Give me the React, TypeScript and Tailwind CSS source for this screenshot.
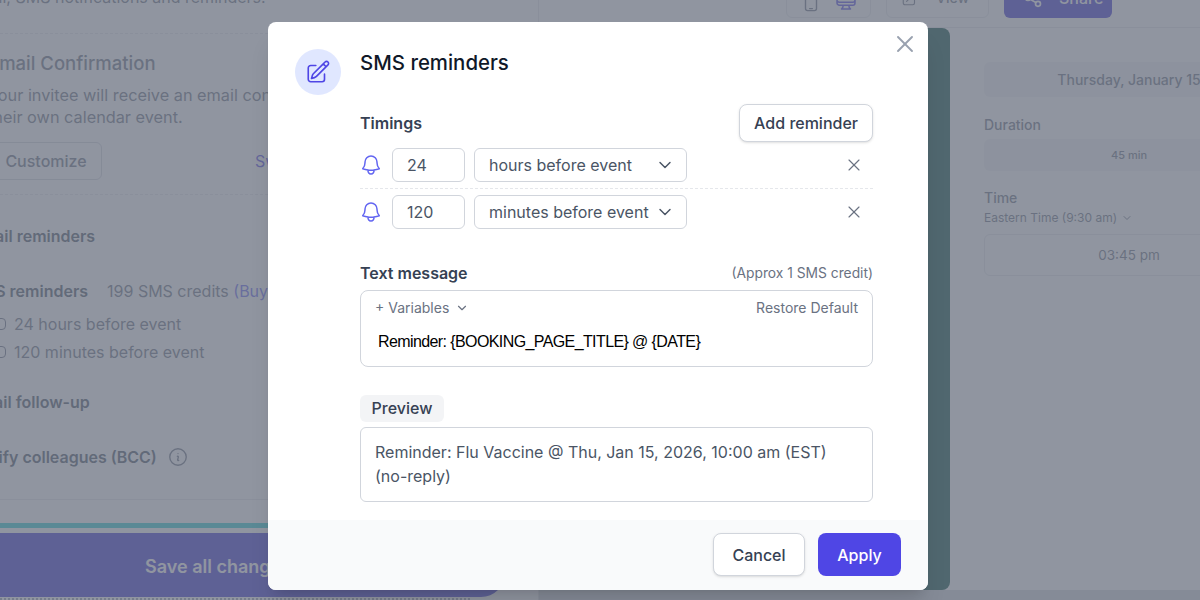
import React from 'react';
import { HiOutlineBell, HiOutlinePencilSquare, HiOutlineArrowTopRightOnSquare, HiOutlineDevicePhoneMobile, HiOutlineComputerDesktop, HiOutlineInformationCircle } from 'react-icons/hi2';
import { ChevronDown, Share2, X } from 'lucide-react';

const ReminderRow = ({ value, unit }: { value: string; unit: string }) => (
  <div className="flex items-center h-[34px]">
    <HiOutlineBell className="w-[24px] h-[24px] -ml-[1px] text-[#6366f1]" />
    <div className="ml-[9px] w-[73px] h-full border border-gray-300 rounded-md pl-[14px] flex items-center text-gray-600 text-base">
      {value}
    </div>
    <div className="ml-[9px] w-[213px] h-full border border-gray-300 rounded-md pl-[14px] pr-[11px] flex items-center justify-between text-gray-600 text-base">
      <span>{unit}</span>
      <ChevronDown className="w-[20px] h-[20px] text-gray-600" strokeWidth={1.75} />
    </div>
    <X className="ml-[157px] w-[20px] h-[20px] text-gray-500" strokeWidth={1.4} />
  </div>
);

const SmsModal = () => (
  <div className="absolute left-[268px] top-[22px] w-[660px] h-[568px] bg-white rounded-lg shadow-xl flex flex-col overflow-hidden">
    <div className="relative flex-1 flex pl-[27px] pt-[27px]">
      <div className="w-[46px] h-[46px] rounded-full bg-indigo-100 flex items-center justify-center">
        <HiOutlinePencilSquare className="w-[26px] h-[26px] text-[#4f46e5]" />
      </div>
      <div className="ml-[19px] w-[513px] -mt-[27px] flex flex-col">
        <h2 className="mt-[27px] text-[20.4px] leading-7 font-medium text-gray-900">SMS reminders</h2>

        <div className="mt-[27px] flex items-center justify-between h-[38px]">
          <span className="text-base font-semibold text-gray-700">Timings</span>
          <button className="h-[38px] px-[14px] border border-gray-300 rounded-lg shadow-sm text-base font-medium text-gray-700 bg-white">
            Add reminder
          </button>
        </div>

        <div className="mt-[6px] pb-[6px] border-b border-dashed border-gray-200">
          <ReminderRow value="24" unit="hours before event" />
        </div>
        <div className="mt-[6px]">
          <ReminderRow value="120" unit="minutes before event" />
        </div>

        <div className="mt-[32px] flex items-center justify-between h-[24px]">
          <span className="text-base font-semibold text-gray-700">Text message</span>
          <span className="text-[13.8px] text-gray-500">(Approx 1 SMS credit)</span>
        </div>
        <div className="mt-[5px] h-[77px] border border-gray-300 rounded-lg px-[14px] pt-[7px]">
          <div className="flex items-center justify-between h-[20px] text-sm text-gray-500">
            <span className="flex items-center gap-[6px]">
              + Variables <ChevronDown className="w-[14px] h-[14px]" />
            </span>
            <span>Restore Default</span>
          </div>
          <p className="mt-[12px] ml-[3px] text-base tracking-[-0.6px] leading-6 text-black font-['Liberation_Sans',sans-serif]">
            {'Reminder: {BOOKING_PAGE_TITLE} @ {DATE}'}
          </p>
        </div>

        <div className="mt-[28px] w-[84px] h-[27px] bg-gray-100 rounded-md flex items-center justify-center pb-[1px] text-base font-medium text-gray-700">
          Preview
        </div>
        <div className="mt-[5px] h-[75px] border border-gray-300 rounded-md px-[14px] py-[12px] text-base leading-6 text-gray-600">
          Reminder: Flu Vaccine @ Thu, Jan 15, 2026, 10:00 am (EST) (no-reply)
        </div>
      </div>
      <button className="absolute right-[9px] top-[8px] text-gray-400">
        <X className="w-[28px] h-[28px]" strokeWidth={1.6} />
      </button>
    </div>

    <div className="h-[70px] bg-gray-50 flex items-center justify-end gap-[13px] pr-[27px] pb-[1px]">
      <button className="w-[92px] h-[43px] bg-white border border-gray-300 rounded-lg shadow-sm text-base font-medium text-gray-700">
        Cancel
      </button>
      <button className="w-[83px] h-[43px] bg-[#4f46e5] rounded-lg text-base font-medium text-white">
        Apply
      </button>
    </div>
  </div>
);

const LeftPane = () => (
  <div className="w-[539px] shrink-0 border-r border-gray-200 flex flex-col overflow-hidden text-gray-500">
    <div className="h-[33px] -mt-[15px] flex items-start">
      <span className="whitespace-nowrap -ml-[34px] text-base">Email, SMS notifications and reminders.</span>
    </div>
    <div className="h-[15px] shrink-0" />
    <div className="mr-[20px] border-t border-dashed border-gray-200" />

    <h3 className="mt-[15px] -ml-[12px] text-[18.5px] leading-7 font-medium text-gray-500 whitespace-nowrap">Email Confirmation</h3>
    <p className="mt-[7px] -ml-[12px] text-[16.3px] leading-[22px] whitespace-nowrap">
      Your invitee will receive an email confirmation with a link to add
      <br />
      their own calendar event.
    </p>
    <div className="mt-[14px] flex items-center">
      <button className="-ml-[10px] h-[38px] w-[112px] border border-gray-300 rounded-md text-base font-medium text-gray-500">Customize</button>
      <span className="ml-[153px] text-base text-[#4f46e5] whitespace-nowrap">Switch</span>
    </div>
    <div className="mt-[14px] mr-[20px] border-t border-dashed border-gray-200" />

    <div className="mt-[29px] -ml-[29px] text-base leading-6 font-semibold text-gray-600">Email reminders</div>
    <div className="mt-[31px] -ml-[30px] flex gap-[19px] text-base leading-6 whitespace-nowrap">
      <span className="font-semibold text-gray-600">SMS reminders</span>
      <span>
        199 SMS credits <span className="text-[#6366f1]">(Buy more)</span>
      </span>
    </div>
    <div className="mt-[9px] -ml-[6px] flex items-center gap-[8px] leading-6 text-base">
      <span className="w-[12px] h-[12px] border border-gray-500 rounded-[4px]" />
      24 hours before event
    </div>
    <div className="mt-[4px] -ml-[6px] flex items-center gap-[8px] leading-6 text-base">
      <span className="w-[12px] h-[12px] border border-gray-500 rounded-[4px]" />
      120 minutes before event
    </div>
    <div className="mt-[26px] -ml-[30px] text-base leading-6 font-semibold text-gray-600">Email follow-up</div>
    <div className="mt-[31px] -ml-[29px] flex items-center gap-[10px] text-base leading-6 font-semibold text-gray-600 whitespace-nowrap">
      Notify colleagues (BCC)
      <HiOutlineInformationCircle className="w-[22px] h-[22px] text-gray-500" />
    </div>
    <div className="mt-[30px] border-t border-gray-200" />

    <div className="mt-[23px] h-[5px] shrink-0 bg-[#2ad0d4]" />
    <div className="mt-[5px] w-[505px] h-[64px] shrink-0 bg-[#3a30d2] rounded-br-[24px] flex items-center pl-[145px] pt-[3px]">
      <span className="text-lg font-semibold text-white whitespace-nowrap">Save all changes</span>
    </div>
    <div className="mt-[1px] w-[470px] border-t-2 border-dotted border-gray-400" />
  </div>
);

const RightPane = () => (
  <div className="flex-1 min-w-0 flex flex-col overflow-hidden">
    <div className="h-[28px] shrink-0 border-b border-gray-200 flex items-start pl-[247px]">
      <div className="-mt-[22px] w-[85px] h-[40px] border border-gray-200 rounded-md flex items-center pl-[13px] gap-[12px]">
        <HiOutlineDevicePhoneMobile className="w-[22px] h-[22px] text-gray-500 mt-[5px]" />
        <HiOutlineComputerDesktop className="w-[24px] h-[24px] text-[#4f46e5] mt-[4px]" />
      </div>
      <div className="ml-[15px] -mt-[22px] w-[103px] h-[40px] border border-gray-200 rounded-md flex items-center pl-[14px] gap-[17px]">
        <HiOutlineArrowTopRightOnSquare className="w-[18px] h-[18px] text-gray-500" />
        <span className="text-sm font-medium text-gray-500">View</span>
      </div>
      <div className="ml-[15px] -mt-[22px] w-[108px] h-[40px] bg-[#3a30d2] rounded-md flex items-center pl-[19px] gap-[16px]">
        <Share2 className="w-[20px] h-[20px] text-white" />
        <span className="text-base font-medium text-white">Share</span>
      </div>
    </div>

    <div className="flex h-[562px] shrink-0">
      <div className="w-[411px] shrink-0 bg-[#004a3c] rounded-r-lg" />
      <div className="w-[324px] shrink-0 pl-[34px] pt-[34px] text-gray-500">
        <div className="h-[35px] bg-gray-100 rounded-md flex items-center justify-center text-sm font-medium">
          Thursday, January 15
        </div>
        <div className="mt-[18px] text-sm font-medium leading-5">Duration</div>
        <div className="mt-[4px] h-[32px] bg-gray-100 rounded-md flex items-center justify-center text-[11px] font-medium">45 min</div>
        <div className="mt-[17px] text-sm font-medium leading-5">Time</div>
        <div className="flex items-center gap-[4px] text-xs leading-4 mt-[2px]">
          Eastern Time (9:30 am) <ChevronDown className="w-[12px] h-[12px]" />
        </div>
        <div className="mt-[8px] h-[42px] border border-gray-200 rounded-md flex items-center justify-center text-[13.5px]">03:45 pm</div>
      </div>
    </div>
    <div className="flex-1 bg-gray-300" />
  </div>
);

const App = () => {
  return (
    <div className="relative w-[1200px] h-[600px] overflow-hidden bg-white font-['Inter',sans-serif]">
      <div className="flex h-full">
        <LeftPane />
        <RightPane />
      </div>
      <div className="absolute inset-0 bg-[rgba(107,114,128,0.75)]" />
      <SmsModal />
    </div>
  );
};

export default App;
